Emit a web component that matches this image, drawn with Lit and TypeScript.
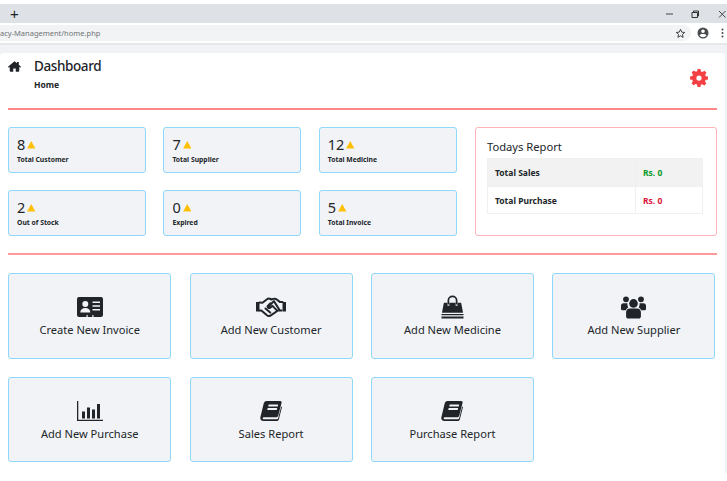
import { LitElement, html, css, svg } from "lit";
import { customElement } from "lit/decorators.js";

const ic = (vb: string, cls: string, body: unknown) =>
  html`<svg class=${cls} viewBox=${vb} aria-hidden="true">${body}</svg>`;

const card = ic("0 0 26 20", "ic w26", svg`
  <path fill="#212529" fill-rule="evenodd" d="M2 0h22a2 2 0 0 1 2 2v16a2 2 0 0 1-2 2h-7.500v-1.600a.6.6 0 0 0-1.200 0V20H10.700v-1.600a.6.6 0 0 0-1.200 0V20H2a2 2 0 0 1-2-2V2a2 2 0 0 1 2-2z"/>
  <circle cx="8.300" cy="7" r="3" fill="#f1f3f7"/>
  <path fill="#f1f3f7" d="M3.300 15.500c0-3 2-4.500 5-4.500s5 1.500 5 4.500z"/>
  <path fill="#f1f3f7" d="M15.500 4.500h7.500v1.600h-7.500zM15.500 8.200h7.500v1.600h-7.500zM15.500 11.900h7.500v1.600h-7.500z"/>`);

const hands = ic("0 0 30 20", "ic w30", svg`
  <path fill="#212529" d="M0 5h3.500v9.500H0zM26.500 5H30v9.500h-3.500z"/>
  <path fill="none" stroke="#212529" stroke-width="2" stroke-linejoin="round" stroke-linecap="round" d="M3.500 5.500l3 .2 4.500-3.400c1-.8 2.300-.9 3.500-.3l1 .5 1.700-.6c1.100-.4 2.300-.3 3.200.3l3.400 2.700 2.700.1M3.500 13.500h1.800l5.700 4.700c1.300 1 2.800.9 3.800.2l7.200-4.900h3.500M9.500 11.500l4.700 4M12.300 9.700l5.600-5.600 5.500 8.600M14.500 6.200l-2.700 2.700c-.8.900.8 2.800 2.300 1.900l2.400-1.900 4.900 5"/>`);

const bag = ic("0 0 24 24", "ic w23", svg`
  <path fill="none" stroke="#212529" stroke-width="1.800" d="M7.700 9.500V5.300a4.300 4.300 0 0 1 8.600 0v4.200"/>
  <path fill="#212529" d="M3 7.500h3.800v3.200h1.900V7.500h6.600v3.200h1.900V7.500H21l2 10.500H1zM.5 19.300h23v1.200H.5zM.5 21.800h23v2.200H.5z" fill-rule="evenodd"/>`);

const users = ic("0 0 26 24", "ic w25", svg`
  <g fill="#212529">
    <circle cx="5.200" cy="4" r="3"/><circle cx="20.800" cy="4" r="3"/>
    <circle cx="13" cy="8.300" r="4.500"/>
    <path d="M2.500 8h4.200a6 6 0 0 0 .8 4.500c-1.100.6-2.100 1.700-2.500 3H1.800c-1 0-1.800-.8-1.800-1.800v-3.200C0 9.100 1.100 8 2.500 8zM19.300 8h4.200C24.900 8 26 9.100 26 10.500v3.200c0 1-.8 1.800-1.800 1.800h-3.200c-.4-1.300-1.400-2.400-2.500-3a6 6 0 0 0 .8-4.500z"/>
    <path d="M9 13.500h8c2 0 3.700 1.700 3.700 3.800v4.500c0 1.200-1 2.200-2.200 2.200h-11c-1.200 0-2.200-1-2.200-2.200v-4.500c0-2.100 1.700-3.800 3.700-3.800z"/>
  </g>`);

const chart = ic("0 0 26 20", "ic w26", svg`
  <path fill="#212529" d="M0 0h1.300v18.700H26V20H0zM5 10.500h3v7H5zM10 6.500h3v11h-3zM15 8.500h3v9h-3zM20 3h3v14.500h-3z"/>`);

const book = ic("0 0 22 20", "ic w22", svg`
  <path fill="#212529" fill-rule="evenodd" d="M6.500 0h13.700c1 0 1.700.8 1.400 1.800l-3.400 12.900c-.2.900-1 1.500-1.900 1.500H4.200c-1 0-1.400.5-1.500 1 0 .6.400 1 1.200 1h13c.6 0 1-.3 1.200-.8l3.100-12 .8.500-3.100 12.300c-.2 1-1.200 1.800-2.300 1.800H3.400C1.400 19.900 0 18.400.3 16.400L3.700 2.400C4.100 1 5.100 0 6.500 0zM8.700 3.600l-.5 1.800h9.500l.5-1.800zM7.700 7.100l-.5 1.800h9.500l.5-1.800z"/>`);

const home = ic("0 0 20 16", "home", svg`
  <path fill="#212529" d="M10 2.800l-7.300 6v6c0 .6.500 1.200 1.100 1.200h4.300v-4.800h3.800V16h4.300c.6 0 1.100-.6 1.100-1.200v-6zM10 0L0 8.200l1.300 1.600L10 2.600l8.700 7.200L20 8.200l-3.400-2.800V1h-2.800v2.100z"/>`);

const gear = ic("0 0 24 24", "gear", svg`
  <path fill="#f44043" fill-rule="evenodd" d="M10 0h4l.6 3.200 1.900.8 2.700-1.800 2.800 2.800-1.800 2.700.8 1.900L24 10v4l-3.200.6-.8 1.900 1.800 2.700-2.800 2.800-2.700-1.800-1.900.8L14 24h-4l-.6-3.200-1.900-.8-2.700 1.800-2.800-2.800 1.800-2.700-.8-1.900L0 14v-4l3.200-.6.8-1.900-1.800-2.700 2.800-2.800 2.700 1.800 1.900-.8zM12 8.500a3.500 3.500 0 1 0 0 7 3.500 3.500 0 0 0 0-7z"/>`);

const warn = html`<svg class="warn" viewBox="0 0 10 9" aria-hidden="true"><path fill="#ffc107" d="M5 0l5 9H0z"/></svg>`;

const stats = [
  ["8", "Total Customer"], ["7", "Total Supplier"], ["12", "Total Medicine"],
  ["2", "Out of Stock"], ["0", "Expired"], ["5", "Total Invoice"],
];
const actions: [unknown, string][] = [
  [card, "Create New Invoice"], [hands, "Add New Customer"], [bag, "Add New Medicine"], [users, "Add New Supplier"],
  [chart, "Add New Purchase"], [book, "Sales Report"], [book, "Purchase Report"],
];

@customElement("app-root")
export class AppRoot extends LitElement {
  static styles = css`
    :host { display: block; width: 727px; height: 481px; overflow: hidden; background: #fff;
      font-family: "Noto Sans", "Open Sans", sans-serif; color: #212529; }
    * { box-sizing: border-box; }
    .tabs { margin-top: 4px; height: 19px; background: #dee1e6; display: flex; align-items: center; padding-left: 10px; color: #202124; }
    .plus { font: 400 15px/1 "Liberation Sans", sans-serif; flex: 1; }
    .winbtns { display: flex; gap: 15px; align-items: center; }
    .winbtns svg { width: 10px; height: 10px; display: block; }
    .winbtns svg:last-child { margin-left: 2px; }
    .toolbar { height: 20px; padding: 2px 0; display: flex; align-items: center; background: #fff; }
    .addr { flex: 1; height: 16px; background: #f1f3f4; border-radius: 0 8px 8px 0; display: flex; align-items: center; padding-right: 5px; justify-content: space-between; font-size: 7.500px; color: #70757a; }
    .tbtns { display: flex; align-items: center; gap: 12px; padding: 0 3px 0 6px; }
    .tbtns svg { display: block; }
    .strip { height: 10px; background: #f0f2f5; border-top: 2px solid #e6e8ec; }
    .page { height: 420px; background: #f0f2f5; padding-right: 2px; }
    .sheet { height: 420px; background: #fff; border-radius: 4px 4px 0 0; padding: 0 8px; display: flex; flex-direction: column; }
    .head { height: 55px; display: flex; align-items: flex-start; padding-top: 4px; flex: none; }
    .home { width: 13px; height: 11px; margin-top: 4px; flex: none; }
    .titles { margin-left: 13px; flex: 1; }
    h1 { margin: 0; font-size: 13.500px; line-height: 18px; font-weight: 500; letter-spacing: -.4px; }
    .crumb { font-size: 8.500px; font-weight: 700; line-height: 12px; margin-top: 4px; display: block; }
    .gear { width: 18px; height: 18px; margin: 12px 9px 0 0; flex: none; }
    hr { margin: 0; border: 0; height: 2px; background: #ff8888; flex: none; }
    .mid { display: flex; margin-top: 17px; gap: 18px; height: 109px; flex: none; }
    .stats { width: 449px; display: grid; grid-template-columns: repeat(3, 138px); grid-template-rows: 46px 46px; column-gap: 17.400px; row-gap: 17px; }
    .stat, .action { background: #f1f3f7; border: 1px solid #8fd8fb; border-radius: 3px; }
    .stat { padding: 7px 8px 0; }
    .num { font-size: 14.500px; line-height: 18px; display: flex; align-items: center; gap: 2px; }
    .warn { width: 8.500px; height: 7.500px; margin-top: 2px; }
    .lbl { font-size: 6.800px; font-weight: 700; line-height: 9px; margin-top: 1.500px; }
    .report { flex: 1; border: 1px solid #ffb3b8; border-radius: 3px; padding: 11px 11px 0; }
    h2 { margin: 0; font-size: 11.200px; line-height: 15px; font-weight: 400; }
    table { border-collapse: collapse; width: 216px; margin-top: 4px; font-size: 8.500px; border: 1px solid #eef0f1; }
    td { font-weight: 700; padding: 0 0 0 7px; border: 1px solid #eef0f1; }
    tr:first-child td { height: 28px; background: #f2f2f2; }
    tr:last-child td { height: 27px; }
    .v { width: 67px; }
    .g { color: #0a9a2a; } .r { color: #dc143c; }
    hr.second { margin-top: 17px; background: #ff9a9a; }
    .actions { display: grid; grid-template-columns: repeat(4, 163px); column-gap: 18.400px; grid-template-rows: 86px 85px; row-gap: 18px; margin: 18px 0 0 .2px; }
    .action { display: flex; flex-direction: column; align-items: center; padding-top: 21px; }
    .iw { height: 24px; display: flex; align-items: center; justify-content: center; }
    .ic { display: block; }
    .w26 { width: 26px; height: 20px; }
    .w30 { width: 30px; height: 20px; }
    .w23 { width: 23px; height: 24px; }
    .w25 { width: 25px; height: 24px; }
    .w22 { width: 22px; height: 20px; }
    .name { font-size: 11.100px; line-height: 15px; margin-top: 3px; font-weight: 400; }
  `;

  render() {
    return html`
      <div class="tabs">
        <span class="plus">+</span>
        <div class="winbtns">
          <svg viewBox="0 0 10 10"><path d="M1 5h7" stroke="#444" stroke-width="1"/></svg>
          <svg viewBox="0 0 10 10"><path d="M2 3.500h5.500v5H2zM3.500 3.500V2H8.500v5H7.500" fill="none" stroke="#333" stroke-width="1"/></svg>
          <svg viewBox="0 0 10 10"><path d="M2 2l6.500 6.500M8.500 2L2 8.500" stroke="#444" stroke-width="1"/></svg>
        </div>
      </div>
      <div class="toolbar">
        <div class="addr">
          <span>acy-Management/home.php</span>
          <svg width="11" height="11" viewBox="0 0 24 24"><path d="M12 3l2.700 6 6.500.7-4.900 4.300 1.400 6.400L12 17l-5.700 3.400 1.400-6.400L2.800 9.700 9.300 9z" fill="none" stroke="#333" stroke-width="2"/></svg>
        </div>
        <div class="tbtns">
          <svg width="12" height="12" viewBox="0 0 24 24"><path fill="#4a4d50" d="M12 1a11 11 0 1 0 0 22 11 11 0 0 0 0-22zm0 4a3.600 3.600 0 1 1 0 7.200A3.600 3.600 0 0 1 12 5zm0 15.500c-3 0-5.600-1.500-7-3.800 1-1.700 4.500-2.700 7-2.700s6 1 7 2.700c-1.400 2.300-4 3.800-7 3.800z"/></svg>
          <svg width="3" height="10" viewBox="0 0 3 10"><g fill="#444"><circle cx="1.500" cy="1.500" r="1"/><circle cx="1.500" cy="5" r="1"/><circle cx="1.500" cy="8.500" r="1"/></g></svg>
        </div>
      </div>
      <div class="strip"></div>
      <div class="page"><div class="sheet">
        <div class="head">
          ${home}
          <div class="titles"><h1>Dashboard</h1><span class="crumb">Home</span></div>
          ${gear}
        </div>
        <hr />
        <div class="mid">
          <div class="stats">
            ${stats.map(([n, l]) => html`<div class="stat"><div class="num">${n}${warn}</div><div class="lbl">${l}</div></div>`)}
          </div>
          <div class="report">
            <h2>Todays Report</h2>
            <table>
              <tr><td>Total Sales</td><td class="v g">Rs. 0</td></tr>
              <tr><td>Total Purchase</td><td class="v r">Rs. 0</td></tr>
            </table>
          </div>
        </div>
        <hr class="second" />
        <div class="actions">
          ${actions.map(([i, n]) => html`<div class="action"><div class="iw">${i}</div><div class="name">${n}</div></div>`)}
        </div>
      </div></div>
    `;
  }
}
